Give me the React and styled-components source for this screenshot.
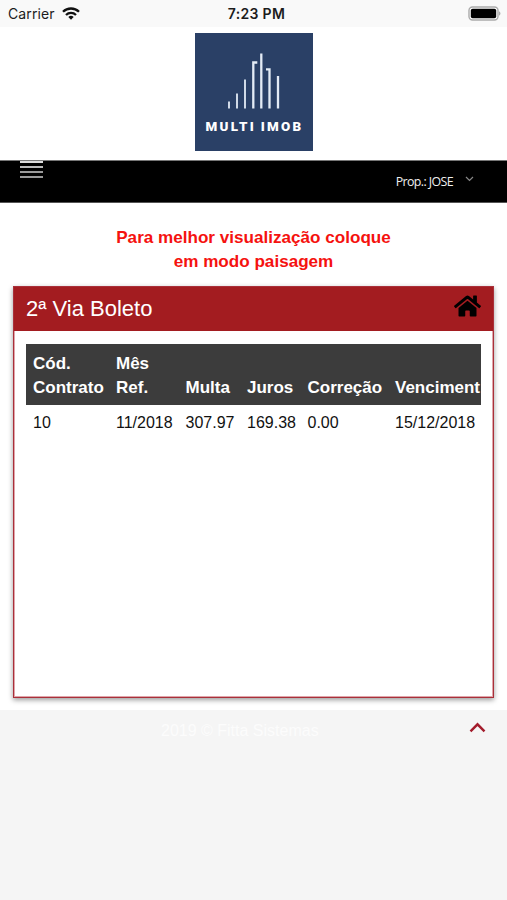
import React from "react";
import styled, { createGlobalStyle } from "styled-components";
import { FaHome } from "react-icons/fa";

const GlobalStyle = createGlobalStyle`
  * {
    box-sizing: border-box;
  }

  body {
    margin: 0;
    background-color: #f5f5f5;
    font-family: "Liberation Sans", Arial, sans-serif;
  }
`;

const Page = styled.div`
  display: flex;
  flex-direction: column;
  width: 100%;
  height: 900px;
  overflow: hidden;
  background-color: #ffffff;
`;

const StatusBar = styled.div`
  display: grid;
  grid-template-columns: 1fr auto 1fr;
  align-items: center;
  flex-shrink: 0;
  height: 27px;
  padding: 0 6px 0 8px;
  background-color: #f9f9f9;
  color: #1c1c1c;
  font-family: Inter, sans-serif;
`;

const Carrier = styled.div`
  display: flex;
  align-items: center;
  gap: 7px;
  font-size: 14px;
  letter-spacing: 0.1px;
`;

const Clock = styled.div`
  padding-left: 4px;
  font-size: 14px;
  font-weight: 600;
  letter-spacing: 0.3px;
`;

const Battery = styled.svg`
  justify-self: end;
`;

const LogoArea = styled.div`
  display: flex;
  justify-content: center;
  flex-shrink: 0;
  height: 133px;
  padding-top: 6px;
`;

const Logo = styled.div`
  display: flex;
  flex-direction: column;
  align-items: center;
  width: 118px;
  height: 118px;
  padding-top: 20px;
  background-color: #2a4066;
`;

const LogoDrawing = styled.svg`
  margin-left: 1px;
`;

const LogoName = styled.div`
  margin-top: 10px;
  padding-left: 2px;
  color: #ffffff;
  font-family: Roboto, sans-serif;
  font-size: 13.4px;
  font-weight: 900;
  line-height: 16px;
  letter-spacing: 2.3px;
  word-spacing: -1px;
  white-space: nowrap;
`;

const Navbar = styled.div`
  display: flex;
  justify-content: space-between;
  flex-shrink: 0;
  height: 43px;
  padding: 0 33px 0 20px;
  background-color: #000000;
  border-top: 1px solid #777777;
  border-bottom: 1px solid #555555;
`;

const MenuButton = styled.div`
  display: flex;
  flex-direction: column;
  gap: 3px;
  width: 23px;
`;

const MenuLine = styled.span`
  height: 2px;
  background-color: ${(props) => props.$color};
`;

const UserMenu = styled.div`
  display: flex;
  align-items: center;
  gap: 12px;
  color: #f0f0f0;
  font-family: "Open Sans", sans-serif;
  font-size: 12.4px;
  letter-spacing: -0.6px;
`;

const UserArrow = styled.svg`
  margin-top: -5px;
`;

const Notice = styled.div`
  flex-shrink: 0;
  height: 83px;
  padding: 23px 105px 0;
  color: #f5120f;
  font-size: 17.1px;
  font-weight: bold;
  line-height: 24.4px;
  text-align: center;
`;

const Card = styled.div`
  flex-shrink: 0;
  height: 412px;
  margin: 0 13px 12px;
  background-color: #ffffff;
  border: 1px solid #a9303a;
  box-shadow: 0 2px 5px rgba(0, 0, 0, 0.4), inset 0 0 0 1px #e0a5aa;
`;

const CardHeader = styled.div`
  display: flex;
  align-items: center;
  justify-content: space-between;
  height: 44px;
  padding: 0 12px;
  background-color: #a31c20;
  color: #ffffff;
  font-size: 22px;
  line-height: 24px;
`;

const HomeIcon = styled(FaHome)`
  width: 27px;
  height: 24px;
  margin-top: -6px;
  color: #000000;
`;

const TableWrapper = styled.div`
  margin: 13px 12px 0;
  overflow: hidden;
`;

const Row = styled.div`
  display: grid;
  grid-template-columns: 83px 69.5px 61.5px 60.5px 87.5px 110px;
  align-items: end;
  width: 472px;
  padding: 6px 0 6px 7px;
  color: #111111;
  font-size: 16px;
  line-height: 24.4px;
`;

const HeadRow = styled(Row)`
  padding: 8px 0 4px 7px;
  background-color: #3c3c3c;
  color: #ffffff;
  font-size: 17px;
  font-weight: bold;
`;

const Footer = styled.div`
  display: flex;
  align-items: flex-start;
  justify-content: space-between;
  flex: 1;
  padding: 11px 21px 0 161px;
  background-color: #f5f5f5;
  color: #fcfcfc;
  font-size: 16px;
  line-height: 20px;
`;

const columns = [
  { title: "Cód. Contrato", value: "10" },
  { title: "Mês Ref.", value: "11/2018" },
  { title: "Multa", value: "307.97" },
  { title: "Juros", value: "169.38" },
  { title: "Correção", value: "0.00" },
  { title: "Venciment", value: "15/12/2018" },
];

const App = () => {
  return (
    <>
      <GlobalStyle />
      <Page>
        {/* Status bar */}
        <StatusBar>
          <Carrier>
            Carrier
            <svg width="18" height="13" viewBox="0 0 18 13" fill="none" stroke="#111111" strokeWidth="2.3">
              <path d="M1 4.8a11.3 11.3 0 0 1 16 0" />
              <path d="M4 8a7.1 7.1 0 0 1 10 0" />
              <path d="M6.3 10.1a3.8 3.8 0 0 1 5.4 0L9 12.8z" fill="#111111" stroke="none" />
            </svg>
          </Carrier>
          <Clock>7:23 PM</Clock>
          <Battery width="33" height="15" viewBox="0 0 33 15">
            <rect x="1" y="1" width="29" height="13" rx="3.5" fill="#ffffff" stroke="#aaaaaa" strokeWidth="1.4" />
            <rect x="2.8" y="2.8" width="25.4" height="9.4" rx="1.8" fill="#000000" />
            <path d="M31.2 5.3v4.4c1.6-.8 1.6-3.6 0-4.4z" fill="#999999" />
          </Battery>
        </StatusBar>

        {/* Logo */}
        <LogoArea>
          <Logo>
            <LogoDrawing width="54" height="56" viewBox="0 0 54 56" fill="none" stroke="#e3ebf5" strokeWidth="2.3">
              <path d="M2 48.5v7M10 40.5v15M18 26.5v29" strokeWidth="1.8" />
              <path d="M26.3 55.5V9.5h4M34.3 0.5v55M39 16.3h3.5v39.2M51 23v32.5" />
            </LogoDrawing>
            <LogoName>MULTI IMOB</LogoName>
          </Logo>
        </LogoArea>

        {/* Navbar */}
        <Navbar>
          <MenuButton>
            <MenuLine $color="#dddddd" />
            <MenuLine $color="#bbbbbb" />
            <MenuLine $color="#999999" />
            <MenuLine $color="#999999" />
          </MenuButton>
          <UserMenu>
            Prop.: JOSE
            <UserArrow width="9" height="6" viewBox="0 0 9 6" fill="none" stroke="#888888" strokeWidth="1.2">
              <path d="M1 1l3.5 3.5L8 1" />
            </UserArrow>
          </UserMenu>
        </Navbar>

        <Notice>Para melhor visualização coloque em modo paisagem</Notice>

        {/* Boleto */}
        <Card>
          <CardHeader>
            <span>2ª Via Boleto</span>
            <HomeIcon />
          </CardHeader>
          <TableWrapper>
            <HeadRow>
              {columns.map((column) => (
                <span key={column.title}>{column.title}</span>
              ))}
            </HeadRow>
            <Row>
              {columns.map((column) => (
                <span key={column.title}>{column.value}</span>
              ))}
            </Row>
          </TableWrapper>
        </Card>

        {/* Footer */}
        <Footer>
          <span>2019 © Fitta Sistemas</span>
          <svg width="17" height="12" viewBox="0 0 17 12" fill="none" stroke="#a31c2c" strokeWidth="2.4">
            <path d="M1.5 10.3l7-7 7 7" />
          </svg>
        </Footer>
      </Page>
    </>
  );
};

export default App;
